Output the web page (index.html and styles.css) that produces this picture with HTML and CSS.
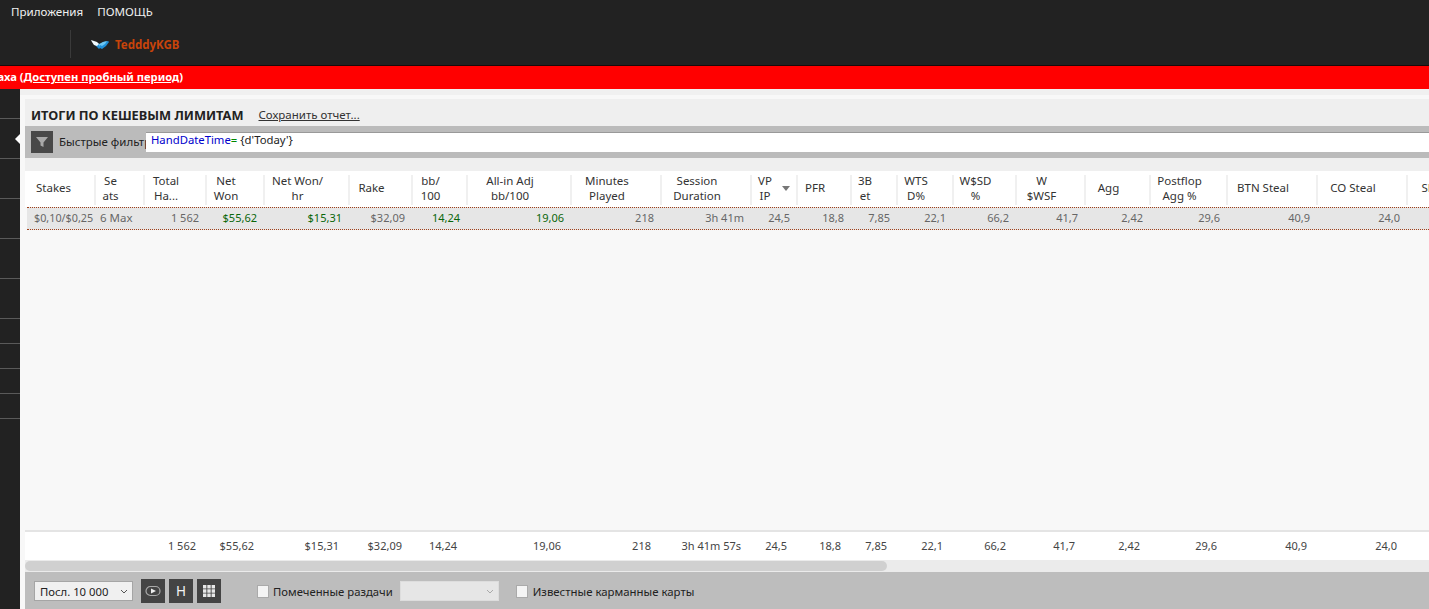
FILE: index.html
```html
<!DOCTYPE html>
<html lang="ru">
<head>
<meta charset="utf-8">
<title>Итоги по кешевым лимитам</title>
<link rel="stylesheet" href="styles.css">
</head>
<body>
<header class="topbar">
  <nav class="menu"><span>Приложения</span><span>ПОМОЩЬ</span></nav>
  <div class="account">
    <span class="divider"></span>
    <svg class="logo" viewBox="0 0 18 10" width="18" height="10"><path fill="#1f8fd8" d="M4 5l3-2 2 2 3-3 5-1 1 1-3 4-4 3-2-1-1 1-2-2z"/><path fill="#6cc6f2" d="M8 4l4-2 4-1-2 3-3 2-2-1-1 2z"/><path fill="#f2fbff" d="M0 0l3 1 3 1 2 2-2 2-3-1-2-3z"/></svg>
    <span class="player">TedddyKGB</span>
  </div>
</header>
<div class="alert"><div class="alert-text">Нет лицензии для Омаха (<a class="alert-link">Доступен пробный период</a>)</div></div>
<div class="main">
  <aside class="sidebar">
    <div class="side-item side-first"></div>
    <div class="side-item side-active"><span class="side-arrow"></span></div>
    <div class="side-item"></div>
    <div class="side-item"></div>
    <div class="side-item"></div>
    <div class="side-item"></div>
    <div class="side-item side-small"></div>
    <div class="side-item side-small"></div>
    <div class="side-item side-small"></div>
    <div class="side-item side-small"></div>
  </aside>
  <section class="content">
    <div class="top-strip"></div>
    <div class="title-band">
      <h1 class="title">ИТОГИ ПО КЕШЕВЫМ ЛИМИТАМ</h1>
      <a class="save-link">Сохранить отчет...</a>
    </div>
    <div class="filter-band">
      <button class="filter-btn"><svg viewBox="0 0 12 12" width="12" height="12"><path fill="#a8a8a8" d="M0 1h12L7.500 6.500V11L4.500 9.500V6.500z"/></svg></button>
      <span class="filter-label">Быстрые фильтры</span>
      <div class="filter-input"><span class="k-blue">HandDateTime</span><span class="k-green">=</span> {d'Today'}</div>
    </div>
    <div class="gap-band"></div>
    <div class="grid-row head">
      <div class="hc">Stakes</div><div class="hc">Se<br>ats</div><div class="hc">Total<br>Ha...</div><div class="hc">Net<br>Won</div><div class="hc">Net Won/<br>hr</div><div class="hc">Rake</div><div class="hc">bb/<br>100</div><div class="hc">All-in Adj<br>bb/100</div><div class="hc">Minutes<br>Played</div><div class="hc">Session<br>Duration</div><div class="hc sorted">VP<br>IP<span class="sort"></span></div><div class="hc">PFR</div><div class="hc">3B<br>et</div><div class="hc">WTS<br>D%</div><div class="hc">W$SD<br>%</div><div class="hc">W<br>$WSF</div><div class="hc">Agg</div><div class="hc">Postflop<br>Agg %</div><div class="hc">BTN Steal</div><div class="hc">CO Steal</div><div class="hc">SB Steal</div>
    </div>
    <div class="grid-row data">
      <div class="dc left stakes">$0,10/$0,25</div><div class="dc left">6 Max</div><div class="dc">1 562</div><div class="dc pos">$55,62</div><div class="dc pos">$15,31</div><div class="dc">$32,09</div><div class="dc pos">14,24</div><div class="dc pos">19,06</div><div class="dc">218</div><div class="dc">3h 41m</div><div class="dc">24,5</div><div class="dc">18,8</div><div class="dc">7,85</div><div class="dc">22,1</div><div class="dc">66,2</div><div class="dc">41,7</div><div class="dc">2,42</div><div class="dc">29,6</div><div class="dc">40,9</div><div class="dc">24,0</div><div class="dc"></div>
    </div>
    <div class="table-fill"></div>
    <div class="grid-row foot">
      <div class="fc"></div><div class="fc"></div><div class="fc">1 562</div><div class="fc">$55,62</div><div class="fc">$15,31</div><div class="fc">$32,09</div><div class="fc">14,24</div><div class="fc">19,06</div><div class="fc">218</div><div class="fc">3h 41m 57s</div><div class="fc">24,5</div><div class="fc">18,8</div><div class="fc">7,85</div><div class="fc">22,1</div><div class="fc">66,2</div><div class="fc">41,7</div><div class="fc">2,42</div><div class="fc">29,6</div><div class="fc">40,9</div><div class="fc">24,0</div><div class="fc"></div>
    </div>
    <div class="scroll"><div class="thumb"></div></div>
    <footer class="toolbar">
      <div class="select"><span>Посл. 10 000</span><svg viewBox="0 0 8 5" width="8" height="5"><path d="M1 1l3 3 3-3" fill="none" stroke="#555"/></svg></div>
      <button class="tool-btn"><svg viewBox="0 0 16 12" width="16" height="12"><rect x="1" y="1.500" width="14" height="9" rx="4.500" fill="none" stroke="#aaa" stroke-width="1.200"/><path fill="#eee" d="M6 3.500l5 2.500-5 2.500z"/></svg></button>
      <button class="tool-btn tool-h">H</button>
      <button class="tool-btn"><svg viewBox="0 0 12 12" width="12" height="12"><path fill="#e8e8e8" d="M0 0h3.400v3.400H0zM4.300 0h3.400v3.400H4.300zM8.600 0H12v3.400H8.600zM0 4.300h3.400v3.400H0zM4.300 4.300h3.400v3.400H4.300zM8.600 4.300H12v3.400H8.600zM0 8.600h3.400V12H0zM4.300 8.600h3.400V12H4.300zM8.600 8.600H12V12H8.600z"/></svg></button>
      <label class="check marked"><span class="box"></span>Помеченные раздачи</label>
      <div class="select select-off"><svg viewBox="0 0 8 5" width="8" height="5"><path d="M1 1l3 3 3-3" fill="none" stroke="#aaa"/></svg></div>
      <label class="check known"><span class="box"></span>Известные карманные карты</label>
    </footer>
  </section>
</div>
</body>
</html>
```
FILE: styles.css
```css
* { box-sizing: border-box; }
html, body { margin: 0; height: 609px; overflow: hidden; }
body {
  display: flex;
  flex-direction: column;
  width: 1429px;
  font-family: "Noto Sans", "Open Sans", "Liberation Sans", sans-serif;
  font-size: 11.5px;
  color: #333;
  background: #f8f8f8;
}
.topbar { height: 66px; background: #222; flex: none; border-bottom: 1px solid #1a0a0a; }
.menu { height: 22px; display: flex; gap: 14px; padding-left: 11px; align-items: center; color: #f0f0f0; font-size: 11.6px; }
.account { height: 43px; display: flex; align-items: flex-start; padding-left: 70px; }
.divider { width: 1px; height: 28px; margin-top: 8px; background: #3a3a3a; }
.logo { margin: 18px 0 0 20px; }
.player { margin: 14px 0 0 6px; color: #c8440a; font-weight: 700; font-size: 11.5px; line-height: 17px; }
.alert { height: 23px; flex: none; background: #f00; color: #fff; font-weight: 700; font-size: 11.2px; line-height: 22px; }
.alert-text { width: 183px; display: flex; justify-content: flex-end; white-space: pre; overflow: hidden; }
.alert-link { text-decoration: underline; }
.main { flex: 1; display: flex; min-height: 0; }
.sidebar { width: 20px; flex: none; background: #222; }
.side-item { height: 40px; border-bottom: 1px solid #5a5a5a; display: flex; justify-content: flex-end; align-items: center; }
.side-first { height: 30px; }
.side-small { height: 25px; }
.side-arrow { width: 0; height: 0; border: 5px solid transparent; border-left-width: 0; border-right-color: #fff; }
.content { flex: 1; min-width: 0; display: flex; flex-direction: column; overflow: hidden; }
.top-strip { height: 6px; flex: none; margin-bottom: 4px; background: #f0f0f0; }
.title-band { height: 27px; flex: none; display: flex; align-items: center; margin-left: 5px; padding: 4px 0 0 6px; background: #efefef; }
.title { margin: 0; font-size: 12.8px; font-weight: 700; color: #222; }
.save-link { margin-left: 15px; text-decoration: underline; color: #333; }
.filter-band { height: 32px; flex: none; display: flex; align-items: center; margin-left: 5px; padding-left: 6px; background: #bbb; }
.filter-btn { width: 22px; height: 22px; padding: 0; border: 0; background: #484848; display: flex; align-items: center; justify-content: center; flex: none; }
.filter-label { width: 87px; margin-left: 6px; padding-bottom: 1px; white-space: nowrap; overflow: hidden; color: #222; flex: none; }
.filter-input { flex: 1; height: 20px; margin-top: -1px; padding-left: 5px; background: #fff; border-top: 1px solid #999; font-size: 11.3px; line-height: 13px; color: #222; white-space: pre; }
.k-blue { color: #00c; }
.k-green { color: #080; }
.gap-band { height: 13px; flex: none; margin-left: 5px; background: #efefef; }
.grid-row {
  display: grid;
  flex: none;
  margin-left: 5px;
  padding-left: 2px;
  grid-template-columns: 67px 49px 62px 58px 85px 63px 55px 104px 90px 90px 46px 54px 46px 56px 63px 69px 65px 77px 90px 90px 90px;
  width: 1500px;
}
.head { height: 36px; background: #fff; padding-top: 4px; padding-bottom: 2px; grid-template-rows: 30px; }
.hc { position: relative; display: flex; align-items: center; justify-content: center; text-align: center; padding: 0 18px 5px 0; line-height: 15px; color: #333; border-left: 2px solid #f0f0f0; }
.hc:first-child { border-left: 0; padding-right: 14px; }
.sort { position: absolute; right: 6px; top: 11px; width: 0; height: 0; border: 4px solid transparent; border-bottom-width: 0; border-top: 5px solid #777; }
.data { height: 23px; background: #e6e6e6; border-top: 1px dotted #a0401a; border-bottom: 1px dotted #a0401a; margin-left: 7px; padding-left: 0; width: 1498px; }
.dc { text-align: right; padding-right: 6px; font-size: 11px; line-height: 20px; color: #666; white-space: nowrap; }
.dc.left { text-align: left; padding: 0 0 0 6px; font-size: 11.5px; }
.dc.stakes { padding-left: 7px; font-size: 10.8px; }
.dc.pos { color: #0a660a; }
.table-fill { flex: 1; min-height: 0; }
.foot { height: 30px; background: #fff; border-top: 2px solid #e4e4e4; }
.fc { text-align: right; padding-right: 9px; font-size: 11px; line-height: 27px; color: #444; white-space: nowrap; }
.scroll { height: 12px; flex: none; margin-left: 5px; padding: 1px 0; background: #ebebeb; }
.thumb { width: 862px; height: 10px; border-radius: 5px; background: #d0d0d0; }
.toolbar { height: 37px; flex: none; display: flex; align-items: center; margin-left: 5px; padding: 1px 0 0 9px; font-size: 11.3px; background: #bdbdbd; }
.select { width: 99px; height: 20px; margin-right: 8px; display: flex; align-items: center; justify-content: space-between; padding: 0 4px 0 5px; background: #f0f0f0; border: 1px solid #a5a5a5; color: #222; flex: none; }
.select-off { margin: 0 0 0 7px; justify-content: flex-end; background: #e6e6e6; border-color: #ddd; }
.tool-btn { width: 24px; height: 24px; margin: -1px 4px 0 0; padding: 0; border: 0; background: #444; color: #f4f4f4; display: flex; align-items: center; justify-content: center; flex: none; }
.tool-h { font-family: "Noto Sans", sans-serif; font-size: 13.5px; }
.check { display: flex; align-items: center; color: #222; white-space: nowrap; }
.marked { margin-left: 32px; }
.known { margin-left: 17px; font-size: 11.4px; }
.box { width: 12px; height: 13px; margin-right: 4px; background: #f4f4f4; border: 1px solid #aaa; }
.known .box { margin-right: 5px; }
```
